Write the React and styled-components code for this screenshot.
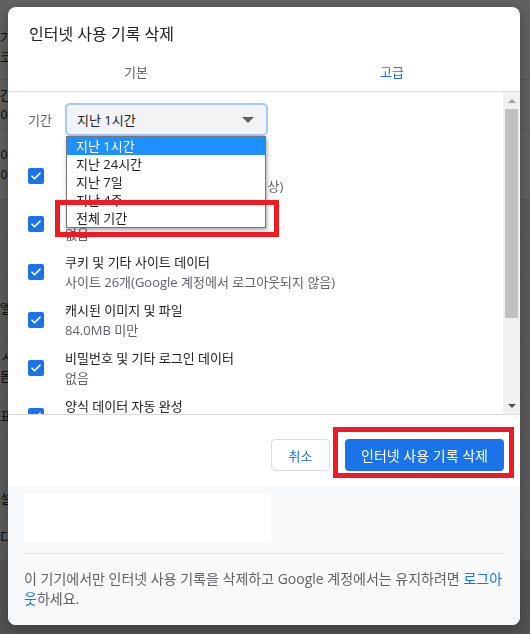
import React from 'react'
import styled, { createGlobalStyle } from 'styled-components'

const GlobalStyle = createGlobalStyle`
  html, body {
    margin: 0;
    padding: 0;
    width: 530px;
    height: 634px;
    overflow: hidden;
    font-family: 'Open Sans', 'Noto Sans CJK KR', sans-serif;
  }
  * { box-sizing: border-box; }
`

const backgroundRows = [
  { height: 15, lines: [] },
  { height: 65, lines: ['기본 브라우저', '코드 설정'] },
  { height: 50, lines: ['간편 검색', '이 기기'] },
  { height: 70, lines: ['이미지 설정', '이전 기록'] },
  { height: 40, lines: [], tone: 'dark' },
  { height: 37, lines: [], tone: 'dark' },
  { height: 63, lines: ['엘리먼트'], tone: 'dark' },
  { height: 53, lines: ['ㅅ사이트', '돔 설정'], tone: 'dark' },
  { height: 47, lines: ['표시'], tone: 'dark' },
  { height: 42, lines: [], tone: 'dark' },
  { height: 33, lines: ['설정'], tone: 'dark' },
  { height: 45, lines: ['디스플레이'], tone: 'dark' },
  { height: 74, lines: [], tone: 'bottom' },
]

const periodOptions = ['지난 1시간', '지난 24시간', '지난 7일', '지난 4주', '전체 기간']

const dataRows = [
  { title: '인터넷 사용 기록', detail: '항목 1,240개(동기화된 기기에서는 이상)' },
  { title: '다운로드 기록', detail: '없음' },
  { title: '쿠키 및 기타 사이트 데이터', detail: '사이트 26개(Google 계정에서 로그아웃되지 않음)' },
  { title: '캐시된 이미지 및 파일', detail: '84.0MB 미만' },
  { title: '비밀번호 및 기타 로그인 데이터', detail: '없음' },
  { title: '양식 데이터 자동 완성', detail: '없음' },
]

export default function App() {
  return (
    <>
      <GlobalStyle />
      <Page>
        {backgroundRows.map((r, i) => (
          <PageRow key={i} $height={r.height} $tone={r.tone}>
            {r.lines.map((l) => (
              <PageText key={l}>{l}</PageText>
            ))}
          </PageRow>
        ))}
      </Page>
      <Backdrop>
        <Dialog>
          <Header>
            <Title>인터넷 사용 기록 삭제</Title>
          </Header>
          <Tabs>
            <Tab>기본</Tab>
            <Tab $active>고급</Tab>
          </Tabs>
          <Body>
            <Content>
              <PeriodRow>
                <Label>기간</Label>
                <SelectWrap>
                  <Select>
                    <span>지난 1시간</span>
                    <Caret />
                  </Select>
                  <Dropdown>
                    {periodOptions.map((o, i) => (
                      <Option key={o} $selected={i === 0}>{o}</Option>
                    ))}
                  </Dropdown>
                </SelectWrap>
              </PeriodRow>
              {dataRows.map((r) => (
                <DataRow key={r.title}>
                  <CheckCell>
                    <Checkbox>
                      <svg width="12" height="12" viewBox="0 0 24 24" fill="none">
                        <path d="M4 12.5l5 5L20 6.5" stroke="#fff" strokeWidth="3.4" strokeLinecap="round" strokeLinejoin="round" />
                      </svg>
                    </Checkbox>
                  </CheckCell>
                  <RowText>
                    <RowTitle>{r.title}</RowTitle>
                    <RowDetail>{r.detail}</RowDetail>
                  </RowText>
                </DataRow>
              ))}
            </Content>
            <Scrollbar>
              <ArrowButton>
                <Triangle $up $color="#a3a3a3" />
              </ArrowButton>
              <Track>
                <Thumb />
              </Track>
              <ArrowButton>
                <Triangle $color="#505050" />
              </ArrowButton>
            </Scrollbar>
          </Body>
          <Footer>
            <CancelButton>취소</CancelButton>
            <PrimaryButton>인터넷 사용 기록 삭제</PrimaryButton>
          </Footer>
          <AccountSection>
            <AccountCard />
            <Divider />
            <Notice>
              이 기기에서만 인터넷 사용 기록을 삭제하고 Google 계정에서는 유지하려면 <NoticeLink>로그아웃</NoticeLink>하세요.
            </Notice>
          </AccountSection>
          <Highlight style={{ left: 47, top: 193, width: 224, height: 37 }} />
          <Highlight style={{ left: 325, top: 420, width: 181, height: 51 }} />
        </Dialog>
      </Backdrop>
    </>
  )
}

const Page = styled.div`
  width: 530px;
  height: 634px;
  display: flex;
  flex-direction: column;
  background: #ffffff;
`

const PageRow = styled.div`
  height: ${(p) => p.$height}px;
  flex-shrink: 0;
  display: flex;
  flex-direction: column;
  justify-content: center;
  gap: 2px;
  border-bottom: 1px solid #e4e4e4;
  background: ${(p) => (p.$tone === 'dark' ? '#f2f2f2' : p.$tone === 'bottom' ? '#d8d8d8' : '#ffffff')};
`

const PageText = styled.div`
  font-size: 13px;
  line-height: 18px;
  color: #202124;
  white-space: nowrap;
`

const Backdrop = styled.div`
  position: fixed;
  inset: 0;
  background: rgba(0, 0, 0, 0.62);
  display: flex;
  align-items: flex-start;
  padding: 7px 0 0 8px;
`

const Dialog = styled.div`
  position: relative;
  width: 512px;
  height: 618px;
  background: #ffffff;
  border-radius: 8px;
  overflow: hidden;
  display: flex;
  flex-direction: column;
  box-shadow: 0 4px 16px rgba(0, 0, 0, 0.3);
`

const Header = styled.div`
  padding: 16px 21px 6px;
`

const Title = styled.div`
  font-size: 16px;
  line-height: 22px;
  color: #202124;
`

const Tabs = styled.div`
  display: grid;
  grid-template-columns: 1fr 1fr;
  height: 41px;
  border-bottom: 1px solid #dadce0;
`

const Tab = styled.div`
  display: flex;
  align-items: center;
  justify-content: center;
  font-size: 13px;
  color: ${(p) => (p.$active ? '#1a73e8' : '#5f6368')};
`

const Body = styled.div`
  display: flex;
  height: 322px;
`

const Content = styled.div`
  flex: 1;
  overflow: hidden;
  padding-top: 11px;
`

const PeriodRow = styled.div`
  display: flex;
  align-items: center;
  padding-left: 20px;
  margin-bottom: 16px;
`

const Label = styled.div`
  width: 37px;
  font-size: 13px;
  color: #5f6368;
`

const SelectWrap = styled.div`
  position: relative;
`

const Select = styled.div`
  width: 203px;
  height: 33px;
  display: flex;
  align-items: center;
  justify-content: space-between;
  padding: 0 10px;
  background: #f1f3f4;
  border: 2px solid #a8c7fa;
  border-radius: 5px;
  font-size: 13px;
  color: #202124;
`

const Caret = styled.div`
  width: 0;
  height: 0;
  border-left: 6px solid transparent;
  border-right: 6px solid transparent;
  border-top: 6px solid #5f6368;
  margin-right: 2px;
`

const Dropdown = styled.div`
  position: absolute;
  left: 1px;
  top: 100%;
  width: 200px;
  background: #ffffff;
  border: 1px solid #767676;
  box-shadow: 1px 2px 4px rgba(0, 0, 0, 0.35);
  z-index: 2;
`

const Option = styled.div`
  height: 18px;
  line-height: 18px;
  padding-left: 9px;
  font-size: 13px;
  color: ${(p) => (p.$selected ? '#ffffff' : '#202124')};
  background: ${(p) => (p.$selected ? '#1e90ff' : 'transparent')};
`

const DataRow = styled.div`
  display: flex;
  align-items: center;
  height: 48px;
  padding-left: 20px;
`

const CheckCell = styled.div`
  width: 37px;
  display: flex;
  align-items: center;
`

const Checkbox = styled.div`
  width: 16px;
  height: 16px;
  border-radius: 2px;
  background: #1a73e8;
  display: flex;
  align-items: center;
  justify-content: center;
`

const RowText = styled.div`
  display: flex;
  flex-direction: column;
`

const RowTitle = styled.div`
  font-size: 13px;
  line-height: 20px;
  color: #202124;
  white-space: nowrap;
`

const RowDetail = styled.div`
  font-size: 13px;
  line-height: 20px;
  color: #5f6368;
  white-space: nowrap;
`

const Scrollbar = styled.div`
  width: 17px;
  display: flex;
  flex-direction: column;
  background: #f1f1f1;
`

const ArrowButton = styled.div`
  height: 17px;
  display: flex;
  align-items: center;
  justify-content: center;
`

const Triangle = styled.div`
  width: 0;
  height: 0;
  border-left: 4px solid transparent;
  border-right: 4px solid transparent;
  ${(p) => (p.$up ? `border-bottom: 4px solid ${p.$color};` : `border-top: 4px solid ${p.$color};`)}
`

const Track = styled.div`
  flex: 1;
  padding: 0 2px;
`

const Thumb = styled.div`
  height: 209px;
  background: #c1c1c1;
`

const Footer = styled.div`
  display: flex;
  justify-content: flex-end;
  gap: 15px;
  padding: 24px 16px 15px;
  border-top: 1px solid #dadce0;
`

const CancelButton = styled.div`
  width: 59px;
  height: 32px;
  display: flex;
  align-items: center;
  justify-content: center;
  border: 1px solid #dadce0;
  border-radius: 4px;
  font-size: 13px;
  color: #1a73e8;
`

const PrimaryButton = styled.div`
  width: 159px;
  height: 32px;
  display: flex;
  align-items: center;
  justify-content: center;
  border-radius: 4px;
  background: #1a73e8;
  font-size: 14px;
  color: #ffffff;
`

const AccountSection = styled.div`
  flex: 1;
  background: #f8f9fa;
  padding: 8px 16px 0;
`

const AccountCard = styled.div`
  width: 247px;
  height: 48px;
  background: #ffffff;
`

const Divider = styled.div`
  height: 1px;
  background: #e3e3e3;
  margin-top: 11px;
`

const Notice = styled.p`
  margin: 15px 0 0;
  font-size: 14px;
  line-height: 20px;
  color: #5f6368;
`

const NoticeLink = styled.span`
  color: #1a73e8;
`

const Highlight = styled.div`
  position: absolute;
  border: 5px solid #ed1c24;
  z-index: 5;
  pointer-events: none;
`
